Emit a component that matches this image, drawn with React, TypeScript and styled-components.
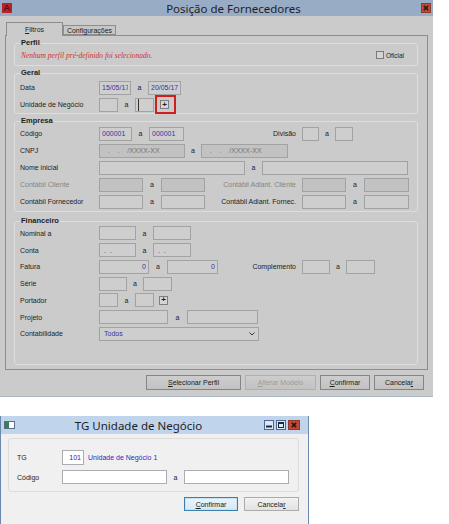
import React from 'react';
import styled, { createGlobalStyle } from 'styled-components';

const GlobalStyle = createGlobalStyle`
  html, body { margin: 0; padding: 0; background: #ffffff; }
  body {
    font-family: "Liberation Sans", Arial, sans-serif;
    font-size: 7px;
    color: #222222;
  }
  * { box-sizing: border-box; }
`;

const Page = styled.div`
  width: 449px;
  height: 524px;
  overflow: hidden;
  background: #ffffff;
  display: flex;
  flex-direction: column;
`;

/* ---------- window chrome ---------- */

const MainWindow = styled.div`
  width: 433px;
  height: 397px;
  flex: none;
  background: #cbcbcb;
  border-bottom: 1px solid #a7b6c6;
  display: flex;
  flex-direction: column;
`;

const TitleBar = styled.div<{ $bg: string; $h: number }>`
  height: ${p => p.$h}px;
  flex: none;
  background: ${p => p.$bg};
  display: flex;
  align-items: center;
  padding: 0 2px;
`;

const TitleText = styled.div<{ $shift?: number }>`
  flex: 1;
  text-align: center;
  padding-left: ${p => p.$shift || 0}px;
  font-family: "Noto Sans", "Liberation Sans", sans-serif;
  font-size: 11.5px;
  color: #1f1f1f;
  white-space: nowrap;
`;

const CtrlBox = styled.div<{ $kind: 'close' | 'plain'; $w?: number }>`
  width: ${p => p.$w || 10}px;
  height: 10px;
  flex: none;
  display: flex;
  align-items: center;
  justify-content: center;
  border: 1px solid ${p => (p.$kind === 'close' ? '#8c3a2c' : '#4b6690')};
  background: ${p => (p.$kind === 'close' ? '#c24a35' : '#dce8f6')};
  margin-left: 2px;
`;

const WindowBody = styled.div`
  flex: 1;
  display: flex;
  flex-direction: column;
  padding: 6px 5px 0 5px;
`;

/* ---------- tabs ---------- */

const TabRow = styled.div`
  display: flex;
  align-items: flex-end;
  height: 13px;
  padding-left: 1px;
`;

const Tab = styled.div<{ $active?: boolean; $w: number }>`
  width: ${p => p.$w}px;
  height: ${p => (p.$active ? 14 : 10)}px;
  margin-bottom: ${p => (p.$active ? -1 : 0)}px;
  position: relative;
  z-index: ${p => (p.$active ? 2 : 1)};
  border: 1px solid #8d8d8d;
  border-bottom: ${p => (p.$active ? 'none' : '1px solid #8d8d8d')};
  background: ${p => (p.$active ? '#cbcbcb' : '#c6c6c6')};
  display: flex;
  align-items: center;
  justify-content: center;
  font-size: 7px;
  color: #222222;
`;

const TabPanel = styled.div`
  border: 1px solid #8d8d8d;
  padding: 2px 9px 4px 8px;
  display: flex;
  flex-direction: column;
`;

/* ---------- group boxes ---------- */

const Group = styled.fieldset<{ $mt?: number; $pt?: number; $pb?: number }>`
  margin: ${p => p.$mt || 0}px 0 0 0;
  padding: ${p => p.$pt || 0}px 5px ${p => p.$pb || 0}px 5px;
  border: 1px solid #dedede;
  border-radius: 3px;
  min-width: 0;
`;

const Legend = styled.legend`
  padding: 0 1px;
  margin-left: 0;
  font-size: 7.5px;
  line-height: 8px;
  font-weight: bold;
  color: #1e1e1e;
`;

const Row = styled.div<{ $h?: number }>`
  display: flex;
  align-items: center;
  height: ${p => p.$h || 17}px;
`;

const Label = styled.div<{ $w?: number; $muted?: boolean }>`
  width: ${p => p.$w || 79}px;
  flex: none;
  white-space: nowrap;
  color: ${p => (p.$muted ? '#858585' : '#222222')};
`;

const LeftCell = styled.div`
  width: 121px;
  flex: none;
  display: flex;
  align-items: center;
`;

const RightLabel = styled.div<{ $muted?: boolean }>`
  width: 76px;
  margin-right: 6px;
  flex: none;
  text-align: right;
  white-space: nowrap;
  display: flex;
  justify-content: flex-end;
  color: ${p => (p.$muted ? '#858585' : '#222222')};
`;

const Field = styled.input<{ $w: number; $off?: boolean; $right?: boolean; $caret?: boolean; $h?: number; $light?: boolean }>`
  width: ${p => p.$w}px;
  height: ${p => p.$h || 14}px;
  flex: none;
  margin: 0;
  padding: 0 2px;
  border: 1px solid ${p => (p.$light ? '#abadb3' : '#a2a2a2')};
  background: ${p => (p.$light ? '#ffffff' : p.$off ? '#c2c2c2' : '#cecece')};
  box-shadow: ${p => (p.$caret ? 'inset 2px 0 0 #cecece, inset 3px 0 0 #333' : 'none')};
  font-family: "Liberation Sans", Arial, sans-serif;
  font-size: 7px;
  color: ${p => (p.$off ? '#747474' : '#3434a2')};
  text-align: ${p => (p.$right ? 'right' : 'left')};
  outline: none;
`;

const Sep = styled.div<{ $w?: number }>`
  width: ${p => p.$w || 17}px;
  flex: none;
  text-align: center;
  color: #222222;
`;

const PlusButton = styled.div<{ $ml?: number }>`
  width: 9px;
  height: 9px;
  flex: none;
  margin-left: ${p => p.$ml || 0}px;
  border: 1px solid #7e7e7e;
  background: #d6d6d6;
  display: flex;
  align-items: center;
  justify-content: center;
  font-size: 8px;
  font-weight: bold;
  line-height: 1;
  color: #202020;
`;

const Highlight = styled.div`
  flex: none;
  margin: -1px 0 -1px 1px;
  padding: 3px 5px 3px 3px;
  border: 2px solid #d01f1f;
`;

const Select = styled.div`
  width: 160px;
  height: 14px;
  flex: none;
  border: 1px solid #a2a2a2;
  background: #cecece;
  display: flex;
  align-items: center;
  justify-content: space-between;
  padding: 0 3px 0 4px;
  color: #3434a2;
`;

const ProfileNote = styled.div`
  flex: 1;
  font-family: "Liberation Serif", "Times New Roman", serif;
  font-style: italic;
  font-size: 7.5px;
  color: #cf3030;
  padding-left: 1px;
`;

const Check = styled.label`
  display: flex;
  align-items: center;
  gap: 2px;
  padding-right: 8px;
  font-size: 6.5px;
  color: #222222;
`;

const CheckBox = styled.span`
  width: 8px;
  height: 8px;
  border: 1px solid #7a7a7a;
  background: #d4d4d4;
`;

/* ---------- buttons ---------- */

const ButtonBar = styled.div<{ $mt: number; $gap: number; $pr: number }>`
  display: flex;
  justify-content: flex-end;
  gap: ${p => p.$gap}px;
  margin-top: ${p => p.$mt}px;
  padding-right: ${p => p.$pr}px;
`;

const Button = styled.div<{ $w: number; $h?: number; $off?: boolean; $tone?: 'dim' | 'light' | 'default' }>`
  width: ${p => p.$w}px;
  height: ${p => p.$h || 15}px;
  display: flex;
  align-items: center;
  justify-content: center;
  font-size: 7px;
  border: 1px solid
    ${p => (p.$tone === 'default' ? '#3c7fb1' : p.$tone === 'light' ? '#acacac' : p.$off ? '#b0b0b0' : '#858585')};
  background: ${p =>
    p.$tone === 'default'
      ? 'linear-gradient(#eaf4fc, #d6e8f6)'
      : p.$tone === 'light'
      ? 'linear-gradient(#f2f2f2, #e2e2e2)'
      : 'linear-gradient(#cdcdcd, #c2c2c2)'};
  box-shadow: ${p => (p.$tone === 'default' ? 'inset 0 0 0 1px #c9e0f2' : 'none')};
  color: ${p => (p.$off ? '#9c9c9c' : '#202020')};
`;

/* ---------- dialog ---------- */

const Spacer = styled.div`
  height: 19px;
  flex: none;
`;

const Dialog = styled.div`
  width: 309px;
  height: 110px;
  flex: none;
  background: #f0f0f0;
  border: 1px solid #6b87ab;
  border-top: none;
  display: flex;
  flex-direction: column;
`;

const DialogBody = styled.div`
  padding: 4px 9px 0 7px;
  display: flex;
  flex-direction: column;
`;

const DialogGroup = styled.div`
  height: 54px;
  border: 1px solid #dcdcdc;
  border-radius: 3px;
  padding: 9px 0 0 8px;
  display: flex;
  flex-direction: column;
`;

const Desc = styled.div`
  margin-left: 4px;
  color: #2b2bc2;
  white-space: nowrap;
`;

/* ---------- icons ---------- */

const AppIcon = () => (
  <svg width="10" height="10" viewBox="0 0 10 10" style={{ flex: 'none' }}>
    <rect x="0" y="0" width="10" height="10" fill="#b8232b" />
    <path d="M2 8 L5 2 L8 8 M3.5 5.5 L6.5 5.5" stroke="#5a0b10" strokeWidth="1" fill="none" />
  </svg>
);

const DialogIcon = () => (
  <svg width="11" height="8" viewBox="0 0 11 8" style={{ flex: 'none', marginLeft: 1 }}>
    <rect x="0.5" y="0.5" width="10" height="7" fill="#ffffff" stroke="#5a7089" />
    <rect x="1" y="1" width="4" height="6" fill="#3c7a5c" />
  </svg>
);

const CloseX = ({ color }: { color: string }) => (
  <svg width="6" height="6" viewBox="0 0 6 6">
    <path d="M0.8 0.8 L5.2 5.2 M5.2 0.8 L0.8 5.2" stroke={color} strokeWidth="1.6" />
  </svg>
);

const Chevron = () => (
  <svg width="6" height="4" viewBox="0 0 6 4">
    <path d="M0.5 0.5 L3 3 L5.5 0.5" stroke="#333" strokeWidth="1" fill="none" />
  </svg>
);

export default function App() {
  return (
    <Page>
      <GlobalStyle />
      <MainWindow>
        <TitleBar $bg="#98adc5" $h={16}>
          <AppIcon />
          <TitleText $shift={36}>Posição de Fornecedores</TitleText>
          <CtrlBox $kind="close" style={{ marginRight: 0 }}>
            <CloseX color="#1a1a1a" />
          </CtrlBox>
        </TitleBar>

        <WindowBody>
          <TabRow>
            <Tab $active $w={57}>
              <span><u>F</u>iltros</span>
            </Tab>
            <Tab $w={53}>
              <span>Confi<u>g</u>urações</span>
            </Tab>
          </TabRow>

          <TabPanel>
            <Group $mt={1} $pb={2}>
              <Legend>Perfil</Legend>
              <Row $h={16}>
                <ProfileNote>Nenhum perfil pré-definido foi selecionado.</ProfileNote>
                <Check>
                  <CheckBox />
                  Oficial
                </Check>
              </Row>
            </Group>

            <Group $mt={3} $pt={2}>
              <Legend>Geral</Legend>
              <Row>
                <Label>Data</Label>
                <Field $w={32} readOnly value="15/05/17" />
                <Sep $w={17}>a</Sep>
                <Field $w={33} readOnly value="20/05/17" />
              </Row>
              <Row>
                <Label>Unidade de Negócio</Label>
                <Field $w={19} readOnly value="" />
                <Sep>a</Sep>
                <Field $w={19} readOnly value="" $caret />
                <Highlight>
                  <PlusButton>+</PlusButton>
                </Highlight>
              </Row>
            </Group>

            <Group $mt={3} $pb={1}>
              <Legend>Empresa</Legend>
              <Row>
                <Label>Código</Label>
                <LeftCell>
                  <Field $w={33} readOnly value="000001" />
                  <Sep>a</Sep>
                  <Field $w={35} readOnly value="000001" />
                </LeftCell>
                <RightLabel>Divisão</RightLabel>
                <Field $w={17} readOnly value="" />
                <Sep $w={16}>a</Sep>
                <Field $w={18} readOnly value="" />
              </Row>
              <Row>
                <Label>CNPJ</Label>
                <Field $w={86} $off readOnly value="   .    .    /XXXX-XX" />
                <Sep $w={16}>a</Sep>
                <Field $w={87} $off readOnly value="   .    .    /XXXX-XX" />
              </Row>
              <Row>
                <Label>Nome inicial</Label>
                <Field $w={146} readOnly value="" />
                <Sep>a</Sep>
                <Field $w={146} readOnly value="" />
              </Row>
              <Row>
                <Label $muted>Contábil Cliente</Label>
                <LeftCell>
                  <Field $w={44} $off readOnly value="" />
                  <Sep $w={18}>a</Sep>
                  <Field $w={44} $off readOnly value="" />
                </LeftCell>
                <RightLabel $muted>Contábil Adiant. Cliente</RightLabel>
                <Field $w={44} $off readOnly value="" />
                <Sep $w={18}>a</Sep>
                <Field $w={45} $off readOnly value="" />
              </Row>
              <Row>
                <Label>Contábil Fornecedor</Label>
                <LeftCell>
                  <Field $w={44} readOnly value="" />
                  <Sep $w={18}>a</Sep>
                  <Field $w={44} readOnly value="" />
                </LeftCell>
                <RightLabel>Contábil Adiant. Fornec.</RightLabel>
                <Field $w={44} readOnly value="" />
                <Sep $w={18}>a</Sep>
                <Field $w={45} readOnly value="" />
              </Row>
            </Group>

            <Group $mt={5} $pb={22}>
              <Legend>Financeiro</Legend>
              <Row $h={16.75}>
                <Label>Nominal a</Label>
                <Field $w={37} readOnly value="" />
                <Sep>a</Sep>
                <Field $w={38} readOnly value="" />
              </Row>
              <Row $h={16.75}>
                <Label>Conta</Label>
                <Field $w={37} readOnly value=" .  ." />
                <Sep>a</Sep>
                <Field $w={38} readOnly value=" .  ." />
              </Row>
              <Row $h={16.75}>
                <Label>Fatura</Label>
                <LeftCell>
                  <Field $w={50} $right readOnly value="0" />
                  <Sep $w={18}>a</Sep>
                  <Field $w={51} $right readOnly value="0" />
                </LeftCell>
                <RightLabel>Complemento</RightLabel>
                <Field $w={28} readOnly value="" />
                <Sep $w={16}>a</Sep>
                <Field $w={29} readOnly value="" />
              </Row>
              <Row $h={16.75}>
                <Label>Série</Label>
                <Field $w={28} readOnly value="" />
                <Sep $w={16}>a</Sep>
                <Field $w={29} readOnly value="" />
              </Row>
              <Row $h={16.75}>
                <Label>Portador</Label>
                <Field $w={19} readOnly value="" />
                <Sep>a</Sep>
                <Field $w={19} readOnly value="" />
                <PlusButton $ml={5}>+</PlusButton>
              </Row>
              <Row $h={16.75}>
                <Label>Projeto</Label>
                <Field $w={69} readOnly value="" />
                <Sep $w={19}>a</Sep>
                <Field $w={71} readOnly value="" />
              </Row>
              <Row $h={16.75}>
                <Label>Contabilidade</Label>
                <Select>
                  <span>Todos</span>
                  <Chevron />
                </Select>
              </Row>
            </Group>
          </TabPanel>

          <ButtonBar $mt={5} $gap={4} $pr={4}>
            <Button $w={95}>
              <span><u>S</u>elecionar Perfil</span>
            </Button>
            <Button $w={71} $off>
              <span><u>A</u>lterar Modelo</span>
            </Button>
            <Button $w={50}>
              <span><u>C</u>onfirmar</span>
            </Button>
            <Button $w={50}>
              <span>Cancela<u>r</u></span>
            </Button>
          </ButtonBar>
        </WindowBody>
      </MainWindow>

      <Spacer />

      <Dialog>
        <TitleBar $bg="#c0d4eb" $h={18}>
          <DialogIcon />
          <TitleText>TG Unidade de Negócio</TitleText>
          <CtrlBox $kind="plain">
            <svg width="6" height="6" viewBox="0 0 6 6">
              <rect x="0" y="3.5" width="6" height="2" fill="#1d2a3a" />
            </svg>
          </CtrlBox>
          <CtrlBox $kind="plain">
            <svg width="6" height="6" viewBox="0 0 6 6">
              <rect x="0.5" y="0.5" width="5" height="5" fill="none" stroke="#1d2a3a" strokeWidth="1" />
              <rect x="0" y="0" width="6" height="2" fill="#1d2a3a" />
            </svg>
          </CtrlBox>
          <CtrlBox $kind="close" $w={12} style={{ marginRight: 6 }}>
            <CloseX color="#2a0a06" />
          </CtrlBox>
        </TitleBar>
        <DialogBody>
          <DialogGroup>
            <Row $h={19.5}>
              <Label $w={45}>TG</Label>
              <Field $w={22} $h={15} $light $right readOnly value="101" style={{ color: '#2020b8' }} />
              <Desc>Unidade de Negócio 1</Desc>
            </Row>
            <Row $h={19.5}>
              <Label $w={45}>Código</Label>
              <Field $w={105} $light readOnly value="" />
              <Sep>a</Sep>
              <Field $w={105} $light readOnly value="" />
            </Row>
          </DialogGroup>
          <ButtonBar $mt={5} $gap={6} $pr={0}>
            <Button $w={54} $h={14} $tone="default">
              <span><u>C</u>onfirmar</span>
            </Button>
            <Button $w={55} $h={14} $tone="light">
              <span>Cancela<u>r</u></span>
            </Button>
          </ButtonBar>
        </DialogBody>
      </Dialog>
    </Page>
  );
}
